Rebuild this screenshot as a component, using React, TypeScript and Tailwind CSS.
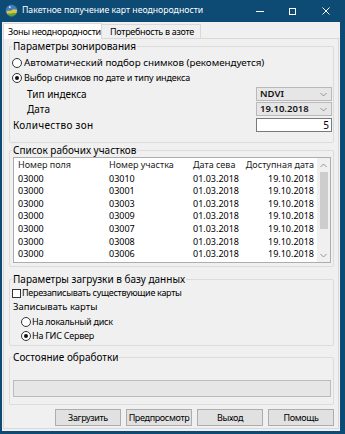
import React from "react";

const font = { fontFamily: '"Noto Sans", "DejaVu Sans", sans-serif' };

function Radio({ checked }: { checked?: boolean }) {
  return (
    <span className="inline-flex w-[10px] h-[10px] rounded-full border border-[#333] bg-white items-center justify-center shrink-0">
      {checked && <span className="w-[4px] h-[4px] rounded-full bg-[#111]" />}
    </span>
  );
}

function Chevron({ up }: { up?: boolean }) {
  return (
    <svg width="7" height="5" viewBox="0 0 7 5" className="shrink-0">
      <path d={up ? "M0.5 4 L3.5 1 L6.5 4" : "M0.5 1 L3.5 4 L6.5 1"} fill="none" stroke="#8a8a8a" strokeWidth="0.9" />
    </svg>
  );
}

function Combo({ value }: { value: string }) {
  return (
    <div className="w-[76px] h-full border border-[#b9b9b9] bg-[#e6e6e6] flex items-center justify-between pl-[3px] pr-[4px] font-semibold text-[#111] text-[9.5px]">
      <span>{value}</span>
      <Chevron />
    </div>
  );
}

function Group({ title, className, children }: { title: string; className?: string; children?: React.ReactNode }) {
  return (
    <div className={"relative border border-[#dcdcdc] rounded-[2px] ml-[5px] mr-[4px] shrink-0 " + (className ?? "")}>
      <span className="absolute left-[2px] -top-[7px] px-[1px] leading-[12px] bg-[#f0f0f0] text-[10px]">{title}</span>
      {children}
    </div>
  );
}

const rows = [
  ["03000", "03010", "01.03.2018", "19.10.2018"],
  ["03000", "03001", "01.03.2018", "19.10.2018"],
  ["03000", "03003", "01.03.2018", "19.10.2018"],
  ["03000", "03009", "01.03.2018", "19.10.2018"],
  ["03000", "03007", "01.03.2018", "19.10.2018"],
  ["03000", "03008", "01.03.2018", "19.10.2018"],
  ["03000", "03006", "01.03.2018", "19.10.2018"],
];

export default function App() {
  return (
    <div className="w-[345px] h-[434px] bg-[#0d4a74] flex flex-col text-black text-[9.5px] whitespace-nowrap" style={font}>
      {/* Title bar */}
      <div className="h-[22px] flex items-center text-white shrink-0">
        <svg width="13" height="13" viewBox="0 0 13 13" className="ml-[5px] mt-[-1px]">
          <circle cx="6.5" cy="6.5" r="6" fill="#3d7fc4" />
          <path d="M1.2 7.5 C3 5.5 5 8 7 6 C8.5 4.5 10.5 6 12 5.5 L12.3 8 C11 11 9 12.5 6.5 12.5 C4 12.5 2 10.5 1.2 7.5Z" fill="#e3c53a" />
          <path d="M2.5 9.5 C4 8.5 5.5 10.5 7.5 9 C9 8 10.5 9.5 11.5 9 C10.5 11.5 8.5 12.5 6.5 12.5 C4.8 12.5 3.4 11.3 2.5 9.5Z" fill="#5aa640" />
          <path d="M4 2.5 C5 2 6 2.8 5.5 3.8 C5 4.6 3.6 4.2 4 2.5Z" fill="#f3f3f3" />
          <circle cx="6.5" cy="6.5" r="6" fill="none" stroke="#1d4f86" strokeWidth="0.8" />
        </svg>
        <span className="ml-[4px] text-[8.7px]">Пакетное получение карт неоднородности</span>
        <div className="ml-auto mr-[3px] flex items-center h-full">
          <div className="w-[33px] h-full flex items-center justify-center">
            <div className="w-[8px] h-[1px] bg-white" />
          </div>
          <div className="w-[33px] h-full flex items-center justify-center">
            <div className="w-[7px] h-[7px] border border-white" />
          </div>
          <div className="w-[33px] h-full flex items-center justify-center">
            <svg width="8" height="8" viewBox="0 0 8 8">
              <path d="M0.5 0.5 L7.5 7.5 M7.5 0.5 L0.5 7.5" stroke="white" strokeWidth="1" />
            </svg>
          </div>
        </div>
      </div>

      {/* Body */}
      <div className="flex-1 ml-[2px] mr-[5px] mb-[3px] bg-[#f0f0f0] flex flex-col">
        {/* Tabs */}
        <div className="h-[16px] flex items-end pl-[1px] shrink-0 text-[9px] tracking-[-0.3px]">
          <div className="relative z-10 h-[16px] -mb-[1px] w-[99px] bg-white border border-b-0 border-[#d9d9d9] flex items-center pl-[4px]">
            Зоны неоднородности
          </div>
          <div className="h-[14px] w-[99px] bg-[#f0f0f0] border border-l-0 border-b-0 border-[#d9d9d9] flex items-center pl-[8px]">
            Потребность в азоте
          </div>
        </div>
        {/* Panel */}
        <div className="flex-1 ml-[1px] mr-[1px] mb-[2px] border border-[#d9d9d9] bg-[#f0f0f0] flex flex-col">
          <Group title="Параметры зонирования" className="mt-[7px] h-[97px]">
            <div className="h-[14px] mt-[9px] flex items-center gap-[2px] pl-[2px]">
              <Radio />
              <span className="text-[9.8px]">Автоматический подбор снимков (рекомендуется)</span>
            </div>
            <div className="h-[14px] mt-[1px] flex items-center gap-[2px] pl-[2px]">
              <Radio checked />
              <span className="text-[9px] tracking-[-0.15px]">Выбор снимков по дате и типу индекса</span>
            </div>
            <div className="h-[14px] mt-[2px] flex items-center justify-between pr-[1px]">
              <span className="pl-[17px] text-[10px]">Тип индекса</span>
              <Combo value="NDVI" />
            </div>
            <div className="h-[14px] mt-[1px] flex items-center justify-between pr-[1px]">
              <span className="pl-[17px] text-[10px]">Дата</span>
              <Combo value="19.10.2018" />
            </div>
            <div className="h-[14px] mt-[2px] flex items-center justify-between pr-[1px]">
              <span className="pl-[3px] text-[10px] tracking-[0.3px]">Количество зон</span>
              <div className="w-[76px] h-full border border-[#7a7a7a] bg-white flex items-center justify-end pr-[2px] text-[10px]">5</div>
            </div>
          </Group>

          <Group title="Список рабочих участков" className="mt-[7px] h-[117px]">
            <div className="mt-[6px] ml-[3px] mr-[2px] h-[106px] border border-[#adadad] bg-white flex text-[9px]">
              <div className="flex-1 flex flex-col overflow-hidden">
                <div className="h-[14px] flex items-center text-[#222]">
                  <div className="w-[91px] pl-[4px] shrink-0">Номер поля</div>
                  <div className="w-[84px] pl-[4px] shrink-0">Номер участка</div>
                  <div className="w-[51px] pl-[4px] shrink-0">Дата сева</div>
                  <div className="flex-1 pr-[3px] text-right">Доступная дата</div>
                </div>
                {rows.map((r, i) => (
                  <div key={i} className="h-[12.6px] flex items-center shrink-0">
                    <div className="w-[91px] pl-[4px] shrink-0">{r[0]}</div>
                    <div className="w-[84px] pl-[4px] shrink-0">{r[1]}</div>
                    <div className="w-[51px] pl-[4px] shrink-0">{r[2]}</div>
                    <div className="flex-1 pr-[3px] text-right">{r[3]}</div>
                  </div>
                ))}
              </div>
              <div className="w-[13px] bg-[#f0f0f0] flex flex-col items-center shrink-0">
                <div className="h-[14px] flex items-center justify-center">
                  <Chevron up />
                </div>
                <div className="w-[8px] h-[57px] bg-[#cdcdcd]" />
                <div className="flex-1" />
                <div className="h-[14px] flex items-center justify-center">
                  <Chevron />
                </div>
              </div>
            </div>
          </Group>

          <Group title="Параметры загрузки в базу данных" className="mt-[12px] h-[67px]">
            <div className="h-[14px] mt-[6px] flex items-center gap-[1px] pl-[2px]">
              <span className="w-[9px] h-[9px] border border-[#333] bg-white shrink-0" />
              <span className="text-[9px] tracking-[-0.3px]">Перезаписывать существующие карты</span>
            </div>
            <div className="h-[14px] flex items-center pl-[3px]">
              <span>Записывать карты</span>
            </div>
            <div className="h-[14px] mt-[1px] flex items-center gap-[1px] pl-[11px]">
              <Radio />
              <span className="text-[9px] tracking-[-0.25px]">На локальный диск</span>
            </div>
            <div className="h-[14px] flex items-center gap-[1px] pl-[11px]">
              <Radio checked />
              <span className="text-[9px] tracking-[-0.25px]">На ГИС Сервер</span>
            </div>
          </Group>

          <Group title="Состояние обработки" className="mt-[11px] h-[48px]">
            <div className="mt-[22px] ml-[3px] mr-[2px] h-[17px] border border-[#bcbcbc] bg-[#e6e6e6]" />
          </Group>

          <div className="mt-[4px] ml-[5px] mr-[4px] flex justify-end gap-[5px] text-[9px] tracking-[-0.35px]">
            {["Загрузить", "Предпросмотр", "Выход", "Помощь"].map((b) => (
              <div key={b} className="w-[66px] h-[17px] border border-[#adadad] bg-[#e1e1e1] flex items-center justify-center">
                {b}
              </div>
            ))}
          </div>
        </div>
      </div>
    </div>
  );
}
